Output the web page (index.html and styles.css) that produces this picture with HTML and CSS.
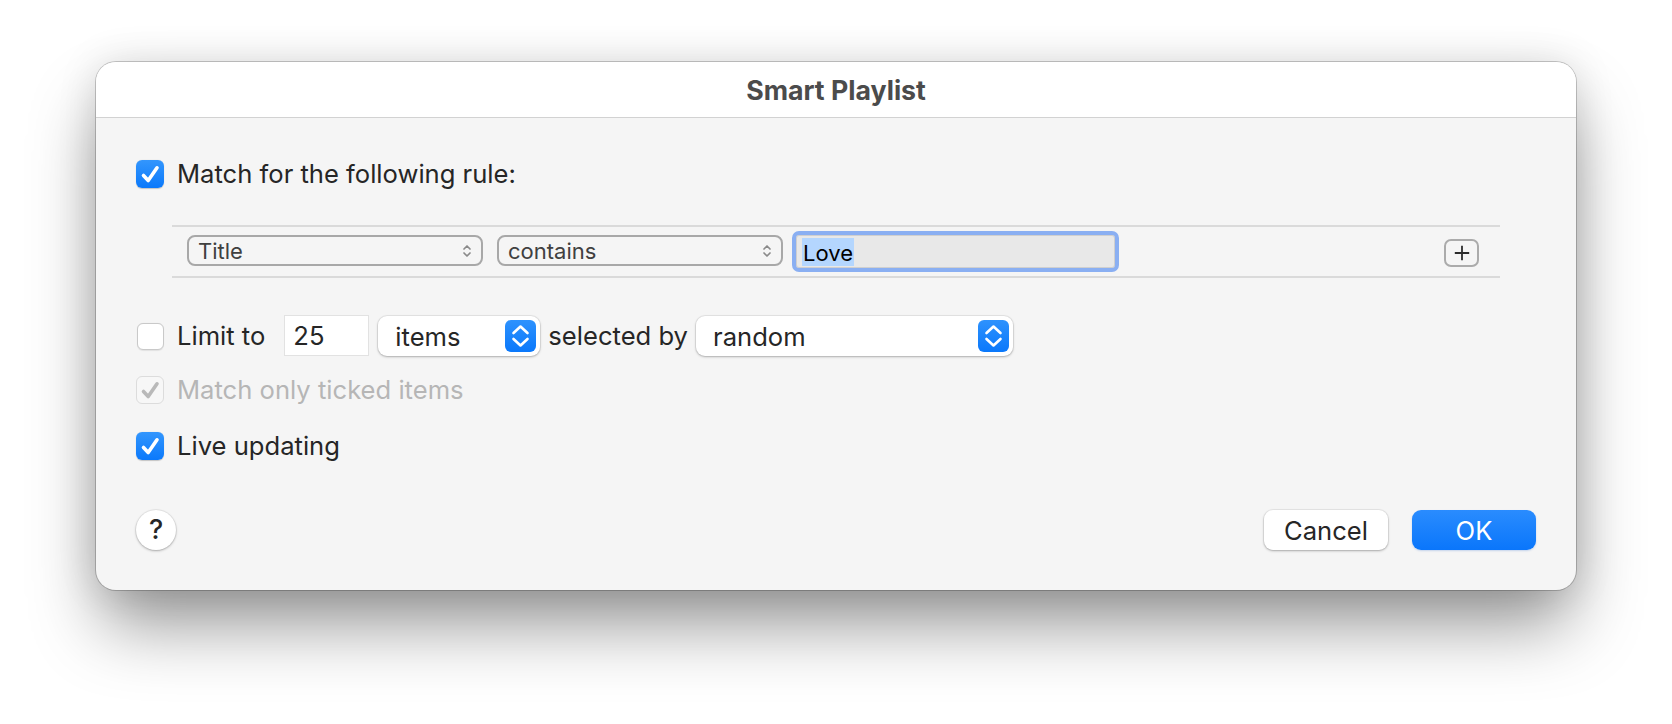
FILE: index.html
```html
<!DOCTYPE html>
<html>
<head>
<meta charset="utf-8">
<link rel="stylesheet" href="styles.css">
</head>
<body>
<div class="window">
  <div class="titlebar">Smart Playlist</div>
  <div class="content">
    <div class="row row-match">
      <span class="cb cb-on"><svg viewBox="0 0 28 28"><path d="M7.5 15.5 L12.2 20.5 L21 7.8"/></svg></span>
      <span class="label">Match for the following rule:</span>
    </div>

    <div class="rules">
      <div class="popup-b popup-title"><span>Title</span><svg class="chev" viewBox="0 0 10 16"><path d="M2 6 L5 3 L8 6 M2 10 L5 13 L8 10"/></svg></div>
      <div class="popup-b popup-contains"><span>contains</span><svg class="chev" viewBox="0 0 10 16"><path d="M2 6 L5 3 L8 6 M2 10 L5 13 L8 10"/></svg></div>
      <div class="field-focus"><span class="sel">Love</span></div>
      <div class="spacer"></div>
      <div class="plus-btn"><svg viewBox="0 0 20 20"><path d="M10 2 V18 M2 10 H18"/></svg></div>
    </div>

    <div class="row row-limit">
      <span class="cb cb-off"></span>
      <span class="label">Limit to</span>
      <span class="numfield">25</span>
      <div class="popup popup-items"><span>items</span><span class="stepper"><svg viewBox="0 0 31 32"><path d="M8.5 13 L15.5 6.5 L22.5 13 M8.5 19 L15.5 25.5 L22.5 19"/></svg></span></div>
      <span class="label label-sel">selected by</span>
      <div class="popup popup-random"><span>random</span><span class="stepper"><svg viewBox="0 0 31 32"><path d="M8.5 13 L15.5 6.5 L22.5 13 M8.5 19 L15.5 25.5 L22.5 19"/></svg></span></div>
    </div>

    <div class="row row-ticked">
      <span class="cb cb-dis"><svg viewBox="0 0 28 28"><path d="M7.5 15.5 L12.2 20.5 L21 7.8"/></svg></span>
      <span class="label dis">Match only ticked items</span>
    </div>

    <div class="row row-live">
      <span class="cb cb-on"><svg viewBox="0 0 28 28"><path d="M7.5 15.5 L12.2 20.5 L21 7.8"/></svg></span>
      <span class="label">Live updating</span>
    </div>

    <div class="buttons">
      <div class="help">?</div>
      <div class="spacer"></div>
      <div class="btn btn-cancel">Cancel</div>
      <div class="btn btn-ok">OK</div>
    </div>
  </div>
</div>
</body>
</html>
```
FILE: styles.css
```css
html, body {
  margin: 0;
  padding: 0;
  background: #ffffff;
}
body {
  font-family: Inter, "Liberation Sans", Arial, sans-serif;
  color: #262626;
  height: 724px;
  overflow: hidden;
}
.window {
  margin: 62px 0 0 96px;
  width: 1480px;
  height: 528px;
  border-radius: 20px;
  background: #f5f5f5;
  box-shadow: 0 0 0 1px rgba(0,0,0,0.2), 0 40px 70px -6px rgba(0,0,0,0.42), 0 0 40px rgba(0,0,0,0.12);
  overflow: hidden;
  display: flex;
  flex-direction: column;
}
.titlebar {
  height: 56px;
  background: #ffffff;
  border-bottom: 1px solid #d2d2d2;
  display: flex;
  align-items: center;
  justify-content: center;
  font-weight: 700;
  font-size: 26.7px;
  color: #4b4b4b;
  box-sizing: border-box;
}
.content {
  padding: 0 40px;
  display: flex;
  flex-direction: column;
}
.row {
  display: flex;
  align-items: center;
}
.label {
  font-size: 25.6px;
  line-height: 28px;
}
.row-match { margin-top: 42px; height: 28px; }
.row-match .label { margin-left: 13px; }

.cb {
  width: 28px;
  height: 28px;
  border-radius: 6px;
  box-sizing: border-box;
  flex: none;
  display: flex;
}
.cb svg { width: 28px; height: 28px; }
.cb svg path {
  fill: none;
  stroke-width: 3.6;
  stroke-linecap: round;
  stroke-linejoin: round;
}
.cb-on {
  background: linear-gradient(#3396fd, #0b79fb);
  box-shadow: 0 0.5px 1px rgba(0,0,0,0.2);
}
.cb-on svg path { stroke: #ffffff; }
.cb-off {
  background: #ffffff;
  border: 1px solid #c9c9c9;
  box-shadow: 0 0.5px 1px rgba(0,0,0,0.08);
}
.cb-dis {
  background: #f7f7f7;
  border: 1px solid #dcdcdc;
}
.cb-dis svg { margin: -1px; }
.cb-dis svg path { stroke: #b9b9b9; }
.dis { color: #b6b6b6; }

.rules {
  margin: 37px 36px 0 36px;
  height: 53px;
  border-top: 2px solid #dadada;
  border-bottom: 2px solid #dadada;
  box-sizing: border-box;
  display: flex;
  align-items: center;
  padding: 0 21px 0 15px;
}
.popup-b {
  height: 31px;
  box-sizing: border-box;
  border: 2px solid #a8a8a8;
  border-radius: 8px;
  display: flex;
  align-items: center;
  justify-content: space-between;
  padding: 0 9px 0 9px;
  font-size: 22px;
  color: #404040;
  margin-top: -2px;
}
.popup-title { width: 296px; }
.popup-contains { width: 286px; margin-left: 14px; }
.chev { width: 10px; height: 16px; }
.chev path { fill: none; stroke: #8a8a8a; stroke-width: 1.7; stroke-linecap: round; stroke-linejoin: round; }
.field-focus {
  margin-left: 9px;
  width: 327px;
  height: 41px;
  box-sizing: border-box;
  border: 4px solid #8aaff2;
  border-radius: 7px;
  background: #e8e8e8;
  box-shadow: inset 0 0 0 1px #cfcfcf;
  display: flex;
  align-items: center;
  padding-left: 6px;
}
.sel {
  background: #b4d6fe;
  color: #000000;
  font-size: 22px;
  height: 28px;
  line-height: 30px;
  padding: 0 1px;
}
.spacer { flex: 1; }
.plus-btn {
  width: 35px;
  height: 28px;
  box-sizing: border-box;
  border: 2px solid #ababab;
  border-radius: 7px;
  display: flex;
  align-items: center;
  justify-content: center;
  margin-top: 2px;
}
.plus-btn svg { width: 18px; height: 18px; }
.plus-btn path { stroke: #2c2c2c; stroke-width: 2; fill: none; }

.row-limit { margin-top: 38px; height: 40px; }
.row-limit .cb { margin-left: 1px; width: 27px; height: 27px; }
.row-limit > .label:nth-child(2) { margin-left: 13px; }
.numfield {
  margin-left: 20px;
  width: 83px;
  height: 39px;
  margin-top: -1px;
  box-sizing: border-box;
  background: #ffffff;
  box-shadow: 0 0 0 1px #e2e2e2, 0 1px 0 #bdbdbd;
  font-size: 25.6px;
  line-height: 39px;
  padding-left: 8px;
}
.popup {
  height: 40px;
  box-sizing: border-box;
  background: #ffffff;
  border-radius: 9px;
  box-shadow: 0 0 0 1px rgba(0,0,0,0.06), 0 1px 2.5px rgba(0,0,0,0.25);
  display: flex;
  align-items: center;
  justify-content: space-between;
  padding: 0 4px 0 17px;
  font-size: 25.6px;
}
.popup-items { width: 162px; margin-left: 10px; }
.popup-random { width: 317px; margin-left: 8px; }
.label-sel { margin-left: 8px; }
.stepper {
  width: 31px;
  height: 32px;
  border-radius: 6px;
  background: linear-gradient(#2e92fd, #0a78fb);
  display: flex;
}
.stepper svg { width: 31px; height: 32px; }
.stepper path { fill: none; stroke: #ffffff; stroke-width: 2.6; stroke-linecap: round; stroke-linejoin: round; }

.row-ticked { margin-top: 20px; height: 28px; }
.row-ticked .label { margin-left: 13px; }
.row-live { margin-top: 28px; height: 28px; }
.row-live .label { margin-left: 13px; }

.buttons {
  margin-top: 50px;
  height: 40px;
  display: flex;
  align-items: center;
}
.help {
  width: 40px;
  height: 40px;
  border-radius: 50%;
  background: #ffffff;
  box-shadow: 0 0 0 1px rgba(0,0,0,0.05), 0 1px 2.5px rgba(0,0,0,0.28);
  display: flex;
  align-items: center;
  justify-content: center;
  font-size: 27px;
  font-weight: 500;
  color: #262626;
  margin-top: -1px;
}
.btn {
  width: 124px;
  height: 40px;
  border-radius: 9px;
  display: flex;
  align-items: center;
  justify-content: center;
  font-size: 25.6px;
  box-sizing: border-box;
}
.btn-cancel {
  background: #ffffff;
  box-shadow: 0 0 0 1px rgba(0,0,0,0.05), 0 1px 2.5px rgba(0,0,0,0.28);
  color: #262626;
}
.btn-ok {
  margin-left: 24px;
  background: linear-gradient(#2a8cfe, #0a76fb);
  color: #ffffff;
  box-shadow: 0 1px 2px rgba(0,80,200,0.2);
}
```
